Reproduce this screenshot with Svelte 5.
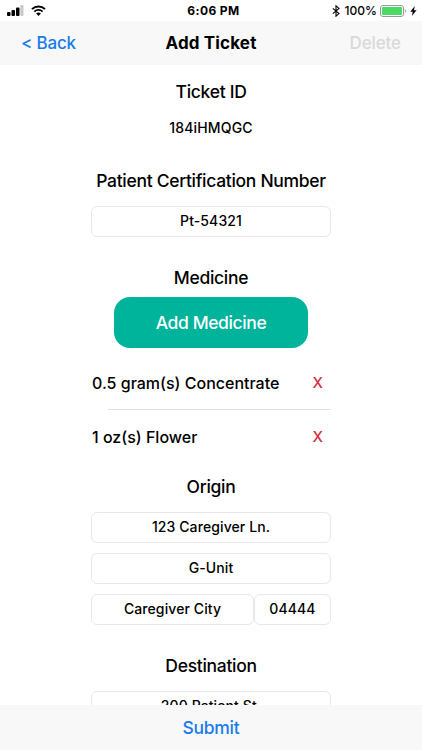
<script>
  let ticketId = '184iHMQGC';
  let patientNumber = 'Pt-54321';

  let medicines = [
    { id: 1, label: '0.5 gram(s) Concentrate' },
    { id: 2, label: '1 oz(s) Flower' }
  ];

  let origin = {
    street: '123 Caregiver Ln.',
    unit: 'G-Unit',
    city: 'Caregiver City',
    zip: '04444'
  };

  let destination = { street: '200 Patient St.' };

  function removeMedicine(id) {
    medicines = medicines.filter((m) => m.id !== id);
  }
</script>

<div class="screen">
  <div class="status">
    <div class="side">
      <svg class="signal" width="17" height="11" viewBox="0 0 17 11">
        <rect x="0" y="7" width="3.5" height="4" rx="1" />
        <rect x="4.5" y="5" width="3.5" height="6" rx="1" />
        <rect x="9" y="2.6" width="3.5" height="8.4" rx="1" />
        <rect x="13.3" y="0" width="3.2" height="11" rx="1" fill="#c9c9c9" />
      </svg>
      <svg class="wifi" width="15" height="11" viewBox="0 0 15 11">
        <path d="M1 4.1C4.6.5 10.4.5 14 4.1" fill="none" stroke="#000" stroke-width="2" />
        <path d="M3.4 6.6c2.3-2.2 5.9-2.2 8.2 0" fill="none" stroke="#000" stroke-width="1.8" />
        <path d="M5.1 8.5c1.4-1.3 3.4-1.3 4.8 0L7.5 11z" />
      </svg>
    </div>
    <span class="time">6:06 PM</span>
    <div class="side right">
      <svg width="8" height="12" viewBox="0 0 8 12">
        <path d="M.8 3.3 7 8.6 4 11.2V.8L7 3.4.8 8.7" fill="none" stroke="#000" stroke-width="1.1" />
      </svg>
      <span class="percent">100%</span>
      <svg class="battery" width="27" height="12" viewBox="0 0 27 12">
        <rect x=".5" y=".5" width="23" height="11" rx="2.5" fill="#fff" stroke="#999" />
        <rect x="2" y="2" width="20" height="8" rx="1" fill="#4cd964" />
        <path d="M24.8 4c1.5.6 1.5 3.4 0 4z" fill="#999" />
      </svg>
      <svg class="bolt" width="7" height="10" viewBox="0 0 7 10">
        <path d="M4.8 0 .3 5.7h2.5L1.8 10 6.6 4.2H4z" />
      </svg>
    </div>
  </div>

  <header>
    <button class="back">&lt; Back</button>
    <h1>Add Ticket</h1>
    <button class="delete" disabled>Delete</button>
  </header>

  <main>
    <h2 class="ticket">Ticket ID</h2>
    <p>{ticketId}</p>

    <h2 class="patient">Patient Certification Number</h2>
    <input bind:value={patientNumber} />

    <h2 class="medicine">Medicine</h2>
    <button class="add">Add Medicine</button>
    <ul>
      {#each medicines as medicine (medicine.id)}
        <li>
          <span>{medicine.label}</span>
          <button class="remove" on:click={() => removeMedicine(medicine.id)}>X</button>
        </li>
      {/each}
    </ul>

    <h2 class="origin">Origin</h2>
    <div class="address">
      <input bind:value={origin.street} />
      <input bind:value={origin.unit} />
      <div class="city">
        <input bind:value={origin.city} />
        <input class="zip" bind:value={origin.zip} />
      </div>
    </div>

    <h2 class="destination">Destination</h2>
    <input bind:value={destination.street} />
  </main>

  <footer>
    <button class="submit">Submit</button>
  </footer>
</div>

<style>
  :global(body) {
    margin: 0;
    overflow: hidden;
  }

  .screen {
    display: flex;
    flex-direction: column;
    width: 422px;
    height: 750px;
    background: #fff;
    color: #000;
    font-family: Inter, 'Liberation Sans', sans-serif;
    font-weight: 550;
  }

  button {
    padding: 0;
    border: 0;
    background: none;
    font: inherit;
    color: inherit;
  }

  .status {
    display: grid;
    grid-template-columns: 1fr auto 1fr;
    align-items: center;
    flex: none;
    height: 21px;
    padding: 0 5px 0 7px;
    font-size: 12px;
    line-height: 21px;
  }

  .side {
    display: flex;
    align-items: center;
    gap: 7px;
  }

  .right {
    justify-content: flex-end;
    gap: 0;
  }

  .time {
    padding-left: 3px;
    font-weight: 700;
    letter-spacing: 0.4px;
  }

  .percent {
    margin: 0 3px 0 5px;
  }

  .bolt {
    margin-left: 3px;
  }

  header {
    display: grid;
    grid-template-columns: 1fr auto 1fr;
    align-items: center;
    flex: none;
    height: 44px;
    padding: 0 21px;
    background: #f8f8f8;
    font-size: 17px;
  }

  .back {
    justify-self: start;
    color: #1a7bea;
    letter-spacing: -0.2px;
  }

  h1 {
    margin: 0;
    font-size: 17px;
    font-weight: 700;
    letter-spacing: 0.15px;
  }

  .delete {
    justify-self: end;
    color: #d9d9d9;
    letter-spacing: -0.1px;
  }

  main {
    display: flex;
    flex-direction: column;
    flex: 1;
    min-height: 0;
    width: 240px;
    margin: 0 auto;
    overflow: hidden;
    text-align: center;
  }

  main > * {
    flex: none;
  }

  h2 {
    margin: 0;
    font-size: 17.5px;
    font-weight: 550;
    line-height: 24px;
    letter-spacing: -0.3px;
    white-space: nowrap;
  }

  .ticket {
    margin-top: 15px;
  }

  p {
    margin: 14px 0 31px;
    font-size: 14px;
    line-height: 20px;
    letter-spacing: 0.15px;
  }

  .patient {
    margin-bottom: 13px;
  }

  input {
    box-sizing: border-box;
    width: 100%;
    min-width: 0;
    height: 31px;
    padding: 0 4px 3px;
    border: 1px solid #e8e8e8;
    border-radius: 6px;
    background: #fff;
    color: inherit;
    font: inherit;
    font-size: 14px;
    letter-spacing: 0.1px;
    text-align: center;
  }

  .medicine {
    margin-top: 29px;
  }

  .add {
    align-self: center;
    width: 194px;
    height: 51px;
    margin-top: 6.5px;
    border-radius: 16px;
    background: #00b39b;
    color: #fff;
    font-size: 17.5px;
    font-weight: 500;
    letter-spacing: -0.4px;
  }

  ul {
    margin: 8.5px 0 0;
    padding: 0;
    list-style: none;
  }

  li {
    display: flex;
    justify-content: space-between;
    align-items: center;
    height: 54px;
    padding: 0 8px 0 1px;
    background: linear-gradient(#e3e3e3, #e3e3e3) 17px 100% / 223px 1px no-repeat;
    font-size: 16px;
  }

  li:last-child {
    background: none;
  }

  .remove {
    padding-bottom: 2px;
    color: #d32f43;
    font-size: 15px;
  }

  .origin {
    margin: 11px 0 13px;
  }

  .address {
    display: flex;
    flex-direction: column;
    gap: 10px;
  }

  .city {
    display: flex;
  }

  .zip {
    flex: 0 0 77px;
  }

  .destination {
    margin: 29px 0 13px;
  }

  footer {
    display: flex;
    justify-content: center;
    align-items: center;
    flex: none;
    height: 45px;
    background: #f8f8f8;
  }

  .submit {
    color: #1a7bea;
    font-size: 17.5px;
    letter-spacing: -0.3px;
  }
</style>
